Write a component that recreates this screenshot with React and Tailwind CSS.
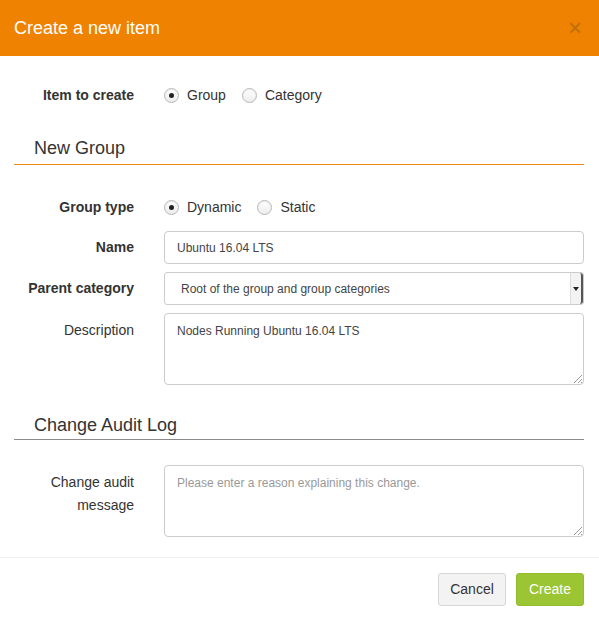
import React, { useState } from "react";

function Radio({ checked, label, onClick }) {
    return (
        <label className="flex items-center cursor-pointer" onClick={onClick}>
            <span className="w-[15px] h-[15px] rounded-full border border-[#b8b8b8] bg-gradient-to-b from-white to-[#ececec] shadow-[inset_0_1px_1px_rgba(0,0,0,0.08)] flex items-center justify-center">
                {checked && <span className="w-[5px] h-[5px] rounded-full bg-[#222]" />}
            </span>
            <span className="ml-2 text-[14px] text-[#333]">{label}</span>
        </label>
    );
}

function Row({ label, bold, children, top }) {
    return (
        <div className={`flex ${top ? "items-start" : "items-center"}`}>
            <div
                className={`w-[120px] shrink-0 text-right text-[14px] text-[#333] leading-[23px] ${bold ? "font-bold" : ""} ${top ? "pt-[6px]" : ""}`}
            >
                {label}
            </div>
            <div className="ml-[30px] flex-1">{children}</div>
        </div>
    );
}

function Resizer() {
    return (
        <svg className="absolute right-[1px] bottom-[1px]" width="12" height="12" viewBox="0 0 12 12">
            <path d="M11 3 L3 11 M11 7 L7 11 M11 10 L10 11" stroke="#9a9a9a" strokeWidth="1" />
        </svg>
    );
}

export default function App() {
    const [item, setItem] = useState("group");
    const [type, setType] = useState("dynamic");

    return (
        <div className="w-[599px] h-[622px] bg-white font-['Liberation_Sans',Arial,sans-serif] text-[#333] flex flex-col">
            <div className="h-[56px] bg-[#ef8200] flex items-center justify-between pl-[14px] pr-[17px] shrink-0">
                <h1 className="text-[18px] text-white">Create a new item</h1>
                <span className="text-[24px] leading-none text-[#c06d10]">×</span>
            </div>

            <div className="pl-[14px] pr-[15px] pt-[28px]">
                <Row label="Item to create" bold>
                    <div className="flex items-center gap-[16px] h-[23px]">
                        <Radio checked={item === "group"} label="Group" onClick={() => setItem("group")} />
                        <Radio checked={item === "category"} label="Category" onClick={() => setItem("category")} />
                    </div>
                </Row>

                <div className="mt-[30px] border-b border-[#ef8a17] pl-[20px] pb-[5px]">
                    <h2 className="text-[18px] leading-[22px] text-[#333]">New Group</h2>
                </div>

                <div className="mt-[31px]">
                    <Row label="Group type" bold>
                        <div className="flex items-center gap-[16px] h-[23px]">
                            <Radio checked={type === "dynamic"} label="Dynamic" onClick={() => setType("dynamic")} />
                            <Radio checked={type === "static"} label="Static" onClick={() => setType("static")} />
                        </div>
                    </Row>
                </div>

                <div className="mt-[12px] flex flex-col gap-[8px]">
                    <Row label="Name" bold>
                        <input
                            className="w-full h-[33px] border border-[#ccc] rounded-[4px] px-[12px] text-[12px] text-[#444] outline-none"
                            defaultValue="Ubuntu 16.04 LTS"
                        />
                    </Row>
                    <Row label="Parent category" bold>
                        <div className="relative w-full h-[33px] border border-[#ccc] rounded-[3px] flex items-center pl-[16px] text-[12px] text-[#444]">
                            Root of the group and group categories
                            <div className="absolute right-0 top-0 bottom-0 w-[13px] bg-[#f3f3f3] border-l border-[#ddd] border-r-2 border-r-[#555] rounded-r-[3px] flex items-center justify-center">
                                <svg width="6" height="4" viewBox="0 0 6 4">
                                    <path d="M0 0 L6 0 L3 4 Z" fill="#222" />
                                </svg>
                            </div>
                        </div>
                    </Row>
                    <Row label="Description" top>
                        <div className="relative">
                            <div className="w-full h-[72px] border border-[#ccc] rounded-[4px] px-[12px] pt-[8px] text-[12px] text-[#444]">
                                Nodes Running Ubuntu 16.04 LTS
                            </div>
                            <Resizer />
                        </div>
                    </Row>
                </div>

                <div className="mt-[29px] border-b border-[#8a8a8a] pl-[20px] pb-[3px]">
                    <h2 className="text-[18px] leading-[22px] text-[#333]">Change Audit Log</h2>
                </div>

                <div className="mt-[25px]">
                    <Row label={<>Change audit<br />message</>} top>
                        <div className="relative">
                            <div className="w-full h-[72px] border border-[#ccc] rounded-[4px] px-[12px] pt-[8px] text-[12px] text-[#999]">
                                Please enter a reason explaining this change.
                            </div>
                            <Resizer />
                        </div>
                    </Row>
                </div>
            </div>

            <div className="mt-[20px] border-t border-[#efefef] flex justify-end gap-[10px] px-[15px] pt-[15px]">
                <button className="w-[68px] h-[33px] bg-[#f3f3f3] border border-[#d6d6d6] rounded-[3px] text-[14px] text-[#333]">
                    Cancel
                </button>
                <button className="w-[68px] h-[33px] bg-[#9bc532] border border-[#94bd2d] rounded-[3px] text-[14px] text-white">
                    Create
                </button>
            </div>
        </div>
    );
}
